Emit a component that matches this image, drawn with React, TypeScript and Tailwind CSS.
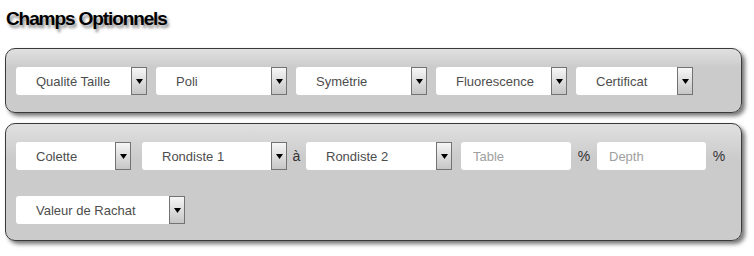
import React from 'react';

function Select({ label, width }: { label: string; width: number }) {
  return (
    <div className="flex h-[28px] shrink-0" style={{ width }}>
      <div className="flex-1 bg-white rounded-l-[3px] flex items-center pl-[20px] pt-[1px] text-[13px] text-[#4d4d4d]">
        {label}
      </div>
      <div className="w-[16px] h-[28px] border border-[#737373] bg-gradient-to-b from-[#f6f6f6] to-[#c6c6c6] flex items-center justify-center">
        <svg width="7" height="5" viewBox="0 0 7 5">
          <polygon points="0,0 7,0 3.5,5" fill="#000" />
        </svg>
      </div>
    </div>
  );
}

function Field({ placeholder, width }: { placeholder: string; width: number }) {
  return (
    <input
      placeholder={placeholder}
      className="h-[28px] bg-white rounded-[3px] pl-[12px] text-[13px] text-[#4d4d4d] placeholder:text-[#a0a0a0] outline-none shrink-0"
      style={{ width }}
    />
  );
}

export default function App() {
  return (
    <div className="w-[754px] h-[256px] bg-white font-['Liberation_Sans',Arial,sans-serif] overflow-hidden">
      <h1 className="pl-[6px] pt-[7px] h-[48px] text-[19px] leading-[24px] tracking-[-1.1px] font-bold text-black [text-shadow:2px_3px_3px_rgba(0,0,0,0.45)]">
        Champs Optionnels
      </h1>
      <div className="ml-[5px] w-[737px] h-[65px] rounded-[10px] border border-[#3a3a3a] bg-gradient-to-b from-[#e0e0e0] to-[#cbcbcb] to-[30%] shadow-[3px_3px_4px_rgba(0,0,0,0.55)] pt-[18px] pl-[10px] flex gap-[9px]">
        <Select label="Qualité Taille" width={131} />
        <Select label="Poli" width={131} />
        <Select label="Symétrie" width={131} />
        <Select label="Fluorescence" width={131} />
        <Select label="Certificat" width={117} />
      </div>
      <div className="mt-[10px] ml-[5px] w-[737px] h-[118px] rounded-[10px] border border-[#3a3a3a] bg-gradient-to-b from-[#e0e0e0] to-[#cbcbcb] to-[30%] shadow-[3px_3px_4px_rgba(0,0,0,0.55)] pt-[18px] pl-[10px] flex flex-col gap-[26px]">
        <div className="flex items-center text-[13px] text-[#333]">
          <Select label="Colette" width={115} />
          <div className="ml-[11px]">
            <Select label="Rondiste 1" width={145} />
          </div>
          <span className="w-[19px] text-center text-[14px]">à</span>
          <Select label="Rondiste 2" width={146} />
          <div className="ml-[9px]">
            <Field placeholder="Table" width={110} />
          </div>
          <span className="w-[26px] text-center text-[14px]">%</span>
          <Field placeholder="Depth" width={109} />
          <span className="w-[26px] text-center text-[14px]">%</span>
        </div>
        <div className="flex">
          <Select label="Valeur de Rachat" width={169} />
        </div>
      </div>
    </div>
  );
}
